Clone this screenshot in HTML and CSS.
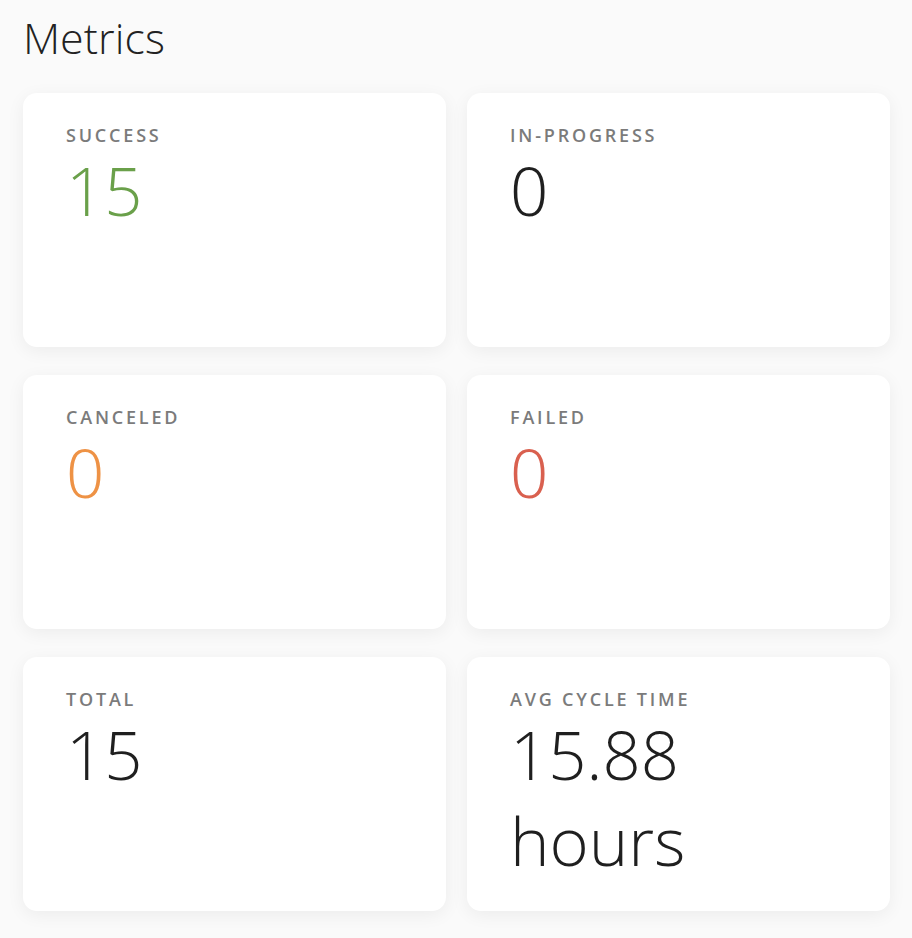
FILE: index.html
```html
<!DOCTYPE html>
<html>
<head>
<meta charset="utf-8">
<link rel="stylesheet" href="styles.css">
</head>
<body>
<main class="page">
  <h1 class="title">Metrics</h1>
  <div class="grid">
    <div class="card"><div class="label">SUCCESS</div><div class="value green">15</div></div>
    <div class="card"><div class="label">IN-PROGRESS</div><div class="value">0</div></div>
    <div class="card"><div class="label">CANCELED</div><div class="value orange">0</div></div>
    <div class="card"><div class="label">FAILED</div><div class="value red">0</div></div>
    <div class="card"><div class="label">TOTAL</div><div class="value">15</div></div>
    <div class="card"><div class="label">AVG CYCLE TIME</div><div class="value">15.88 hours</div></div>
  </div>
</main>
</body>
</html>
```

FILE: styles.css
```css
html, body {
  margin: 0;
  padding: 0;
  background: #fafafa;
}
body {
  font-family: "Open Sans", "Liberation Sans", sans-serif;
  color: #1f1f1f;
}
.page {
  padding: 12px 22px 26px 23px;
}
.title {
  margin: 0;
  font-family: "Open Sans Light", "Open Sans", sans-serif;
  font-size: 43px;
  font-weight: 300;
  line-height: 52px;
  color: #222;
}
.grid {
  margin-top: 29px;
  display: grid;
  grid-template-columns: 423px 423px;
  column-gap: 21px;
  row-gap: 28px;
}
.card {
  background: #fff;
  border-radius: 14px;
  height: 254px;
  box-sizing: border-box;
  padding: 33px 43px 0 43px;
  box-shadow: 0 4px 18px rgba(0, 0, 0, 0.06);
}
.label {
  font-size: 18px;
  line-height: 18px;
  font-weight: 600;
  letter-spacing: 2.8px;
  color: #7b7b7b;
}
.value {
  font-family: "Open Sans Light", "Open Sans", sans-serif;
  font-size: 67px;
  font-weight: 300;
  line-height: 86px;
  margin-top: 3px;
  color: #1f1f1f;
  max-width: 200px;
}
.green { color: #6aa04a; }
.orange { color: #ee9245; }
.red { color: #d9604f; }
```
